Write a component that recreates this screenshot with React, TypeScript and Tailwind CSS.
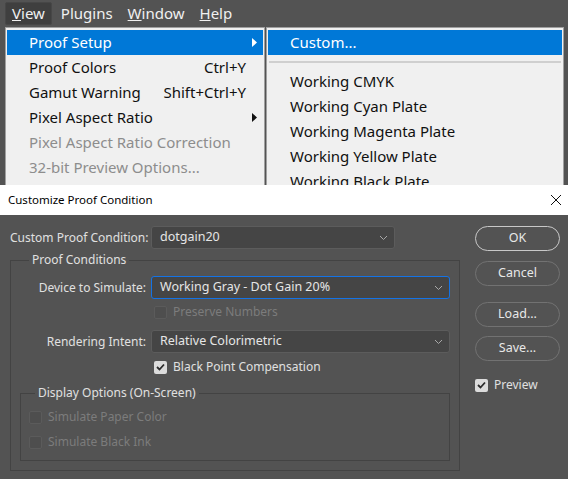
import React from 'react';

const font = { fontFamily: '"Noto Sans", "Open Sans", sans-serif' };

const Chevron = () => (
  <svg width="9" height="6" viewBox="0 0 9 6" className="shrink-0">
    <path d="M1 1 L4.5 4.5 L8 1" fill="none" stroke="#a8a8a8" strokeWidth="1" />
  </svg>
);

const Arrow = ({ color }: { color: string }) => (
  <svg width="5" height="9" viewBox="0 0 5 9">
    <path d="M0 0 L5 4.5 L0 9 Z" fill={color} />
  </svg>
);

const Check = ({ checked, disabled }: { checked?: boolean; disabled?: boolean }) => (
  <span
    className={
      'flex shrink-0 w-[13px] h-[13px] items-center justify-center rounded-[2px] ' +
      (disabled ? 'bg-[#4e4e4e] border border-[#5b5b5b]' : 'bg-[#dcdcdc]')
    }
  >
    {checked && (
      <svg width="9" height="8" viewBox="0 0 9 8">
        <path d="M1 4 L3.5 6.5 L8 1.5" fill="none" stroke="#2b2b2b" strokeWidth="1.8" />
      </svg>
    )}
  </span>
);

const Select = ({ value, focused, className }: { value: string; focused?: boolean; className: string }) => (
  <div
    className={
      'flex h-[23px] items-center justify-between pl-[8px] pr-[6px] rounded-[3px] bg-[#454545] text-[12.5px] text-[#e6e6e6] ' +
      (focused ? 'border border-[#1473e6]' : 'border border-[#5c5c5c]') +
      ' ' +
      className
    }
  >
    <span className="whitespace-nowrap">{value}</span>
    <Chevron />
  </div>
);

const Btn = ({ label, primary, className }: { label: string; primary?: boolean; className?: string }) => (
  <div
    className={
      'flex h-[25px] w-[85px] items-center justify-center rounded-full text-[12.5px] text-[#e8e8e8] border ' +
      (primary ? 'border-[#c8c8c8]' : 'border-[#727272]') +
      ' ' +
      (className ?? '')
    }
  >
    {label}
  </div>
);

const menuItems = [
  { label: 'Proof Setup', sub: true, active: true },
  { label: 'Proof Colors', key: 'Ctrl+Y' },
  { label: 'Gamut Warning', key: 'Shift+Ctrl+Y' },
  { label: 'Pixel Aspect Ratio', sub: true },
  { label: 'Pixel Aspect Ratio Correction', disabled: true },
  { label: '32-bit Preview Options...', disabled: true },
];

const subItems = ['Working CMYK', 'Working Cyan Plate', 'Working Magenta Plate', 'Working Yellow Plate', 'Working Black Plate'];

export default function App() {
  return (
    <div className="relative w-[568px] h-[479px] overflow-hidden bg-[#535353]" style={font}>
      {/* menu bar */}
      <div className="flex h-[27px] items-center text-[15px] text-[#f0f0f0]">
        <div className="ml-[5px] flex h-[23px] items-center px-[6px] bg-[#3f3f3f] border border-[#474747] rounded-[2px]">
          <span><u>V</u>iew</span>
        </div>
        <span className="ml-[9px]">Plugins</span>
        <span className="ml-[15px]"><u>W</u>indow</span>
        <span className="ml-[15px]"><u>H</u>elp</span>
      </div>

      {/* View menu */}
      <div className="absolute left-[5px] top-[27px] w-[260px] h-[170px] bg-[#f0f0f0] border border-[#a0a0a0] pt-[2px] px-[1px] text-[15px]">
        {menuItems.map((it) => (
          <div
            key={it.label}
            className={
              'flex h-[25px] items-center pl-[22px] pr-[6px] ' +
              (it.active ? 'bg-[#0078d7] text-white' : it.disabled ? 'text-[#8d8d8d]' : 'text-[#111]')
            }
          >
            <span className="flex-1 leading-[20px] pb-[2px]">{it.label}</span>
            {it.key && <span className="mr-[11px] leading-[20px] pb-[2px]">{it.key}</span>}
            {it.sub && <Arrow color={it.active ? '#ffffff' : '#111111'} />}
          </div>
        ))}
      </div>

      {/* Proof Setup submenu */}
      <div className="absolute left-[266px] top-[27px] w-[298px] h-[170px] bg-[#f0f0f0] border border-[#a0a0a0] pt-[2px] px-[1px] text-[15px] text-[#111]">
        <div className="flex h-[25px] items-center pl-[22px] bg-[#0078d7] text-white">
          <span className="leading-[20px] pb-[2px]">Custom...</span>
        </div>
        <div className="mx-[1px] mt-[6px] mb-[6px] h-[2px] bg-[#cfcfcf]" />
        {subItems.map((s) => (
          <div key={s} className="flex h-[25px] items-center pl-[22px]">
            <span className="leading-[20px] pb-[2px]">{s}</span>
          </div>
        ))}
      </div>

      {/* dialog */}
      <div className="absolute left-0 top-[185px] w-[568px] h-[294px] flex flex-col">
        <div className="flex shrink-0 h-[30px] items-center justify-between bg-white pl-[8px] pr-[6px] text-[11.5px] text-black">
          <span>Customize Proof Condition</span>
          <svg width="12" height="12" viewBox="0 0 12 12">
            <path d="M1 1 L11 11 M11 1 L1 11" stroke="#111" strokeWidth="1" />
          </svg>
        </div>
        <div className="flex flex-1 min-h-0 bg-[#535353] text-[12px] text-[#e0e0e0]">
          <div className="flex flex-col w-[460px] pl-[10px] pt-[11px]">
            <div className="flex h-[23px] items-center">
              <span className="w-[141px] shrink-0 whitespace-nowrap">Custom Proof Condition:</span>
              <Select value="dotgain20" className="w-[244px]" />
            </div>

            {/* Proof Conditions group */}
            <div className="relative mt-[11px] h-[211px] w-[450px] border border-[#434343]">
              <span className="absolute -top-[10px] left-[18px] px-[3px] bg-[#535353] leading-[18px]">Proof Conditions</span>
              <div className="flex flex-col pt-[15px]">
                <div className="flex h-[23px] items-center">
                  <span className="w-[140px] shrink-0 text-right pr-[5px] whitespace-nowrap">Device to Simulate:</span>
                  <Select value="Working Gray - Dot Gain 20%" focused className="w-[299px]" />
                </div>
                <div className="flex h-[18px] items-center gap-[6px] mt-[4px] ml-[143px] text-[#7c7c7c]">
                  <Check disabled />
                  <span>Preserve Numbers</span>
                </div>
                <div className="flex h-[23px] items-center mt-[9px]">
                  <span className="w-[140px] shrink-0 text-right pr-[5px] whitespace-nowrap">Rendering Intent:</span>
                  <Select value="Relative Colorimetric" className="w-[299px]" />
                </div>
                <div className="flex h-[18px] items-center gap-[6px] mt-[5px] ml-[143px]">
                  <Check checked />
                  <span>Black Point Compensation</span>
                </div>

                {/* Display Options group */}
                <div className="relative mt-[17px] ml-[9px] h-[68px] w-[430px] border border-[#434343]">
                  <span className="absolute -top-[10px] left-[14px] px-[3px] bg-[#535353] leading-[18px]">Display Options (On-Screen)</span>
                  <div className="flex flex-col pt-[14px] pl-[8px] text-[#7c7c7c]">
                    <div className="flex h-[18px] items-center gap-[6px]">
                      <Check disabled />
                      <span>Simulate Paper Color</span>
                    </div>
                    <div className="flex h-[18px] items-center gap-[6px] mt-[7px]">
                      <Check disabled />
                      <span>Simulate Black Ink</span>
                    </div>
                  </div>
                </div>
              </div>
            </div>
          </div>

          {/* buttons */}
          <div className="flex flex-col ml-[15px] pt-[11px]">
            <Btn label="OK" primary />
            <Btn label="Cancel" className="mt-[10px]" />
            <Btn label="Load..." className="mt-[16px]" />
            <Btn label="Save..." className="mt-[9px]" />
            <div className="flex h-[18px] items-center gap-[6px] mt-[15px]">
              <Check checked />
              <span>Preview</span>
            </div>
          </div>
        </div>
      </div>
    </div>
  );
}
